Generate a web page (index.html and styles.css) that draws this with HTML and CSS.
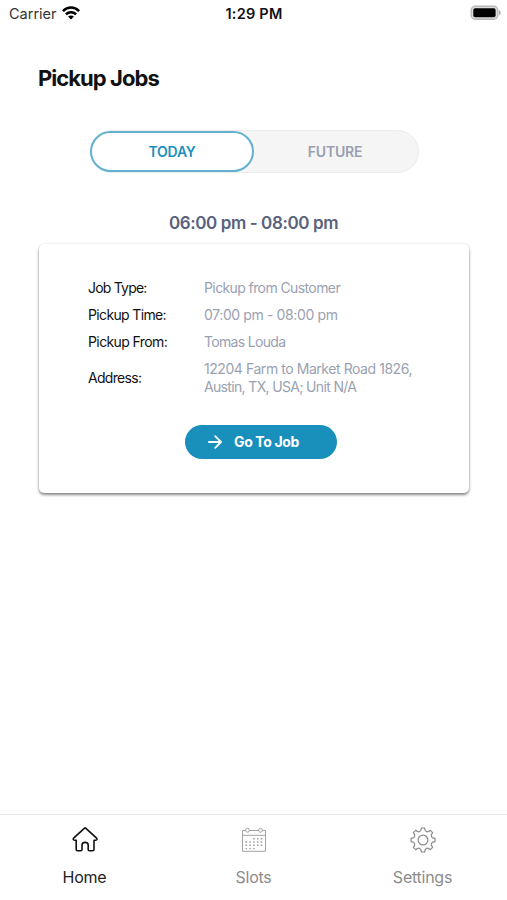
FILE: index.html
```html
<!DOCTYPE html>
<html lang="en">
<head>
<meta charset="utf-8">
<title>Pickup Jobs</title>
<link rel="stylesheet" href="styles.css">
</head>
<body>
<div class="app">
  <header class="status">
    <div class="carrier"><span>Carrier</span>
      <svg class="wifi" viewBox="0 0 18 14" width="18" height="14"><g fill="none" stroke="#000" stroke-width="2.5"><path d="M.9 5.1C5.500.3 12.500.3 17.100 5.100"/><path d="M3.900 8.300c2.800-2.800 7.400-2.800 10.200 0"/></g><path d="M6.100 10.500c1.700-1.500 4.100-1.500 5.800 0L9 13.600z"/></svg>
    </div>
    <span class="clock">1:29 PM</span>
    <svg class="battery" viewBox="0 0 32 16" width="32" height="16"><rect x="1.200" y="1.200" width="26.600" height="13" rx="4" fill="#ddd" stroke="#b8b8b8" stroke-width="1.400"/><rect x="3.300" y="3.200" width="22.300" height="9" rx="1.800"/><path d="M29 5.300c2.300.9 2.300 4 0 4.900z" fill="#aaa"/></svg>
  </header>
  <main class="content">
    <h1>Pickup Jobs</h1>
    <div class="tabs"><button class="tab active"><span>TODAY</span></button><button class="tab"><span>FUTURE</span></button></div>
    <h2><span>06:00 pm - 08:00 pm</span></h2>
    <section class="card">
      <dl>
        <dt><span class="l1">Job Type:</span></dt><dd><span class="v1">Pickup from Customer</span></dd>
        <dt><span class="l2">Pickup Time:</span></dt><dd><span class="v2">07:00 pm - 08:00 pm</span></dd>
        <dt><span class="l3">Pickup From:</span></dt><dd><span class="v3">Tomas Louda</span></dd>
        <dt><span class="l4">Address:</span></dt><dd><span class="v4">12204 Farm to Market Road 1826,</span><br><span class="v5">Austin, TX, USA; Unit N/A</span></dd>
      </dl>
      <button class="go"><svg viewBox="0 0 14 14" width="14" height="14" fill="none" stroke="#fff" stroke-width="1.800" stroke-linecap="round" stroke-linejoin="round"><path d="M1 7h12M7.200 1.200 13 7l-5.800 5.800"/></svg><span>Go To Job</span></button>
    </section>
  </main>
  <nav class="nav">
    <a class="item current"><svg viewBox="0 0 28 28" width="28" height="28" fill="none" stroke="#111" stroke-width="1.600" stroke-linejoin="round" stroke-linecap="round"><path d="M13.300 2.300 2.600 12.200c-.9.900-.3 2 .8 2h1.800v9.300c0 .8.500 1.300 1.300 1.300h3.200c.8 0 1.300-.5 1.300-1.300v-4.400c0-1.900 1.100-2.700 3.100-2.700s3.100.8 3.100 2.700v4.400c0 .8.500 1.300 1.300 1.300h3.200c.8 0 1.300-.5 1.300-1.300v-9.300h1.800c1.100 0 1.700-1.100.8-2L14.900 2.300q-.8-.7-1.600 0Z"/></svg><span>Home</span></a>
    <a class="item"><svg viewBox="0 0 28 28" width="28" height="28" fill="none" stroke="#a3a3a3" stroke-width="1"><path d="M5.800 4.500H2.500v20.800h23V4.500h-3.300M9.200 4.500h9.600M2.500 9.300h23"/><circle cx="7.500" cy="4.300" r="1.900"/><circle cx="20.500" cy="4.300" r="1.900"/><path stroke-width="1.400" stroke-dasharray="1.600 2.200" d="M13.100 12.700h10M5.500 16h17.500M5.500 19.300h17.500M5.500 22.600h10"/></svg><span>Slots</span></a>
    <a class="item"><svg viewBox="-14 -14 28 28" width="28" height="28" fill="none" stroke="#8c8c8c" stroke-width="1.200" stroke-linejoin="round"><path d="M-1.600-12H1.600L2.200-9.500Q3.300-7.950 5.160-8.270L7.350-9.620 9.620-7.350 8.270-5.160Q7.950-3.300 9.500-2.200L12-1.600V1.600L9.500 2.200Q7.950 3.300 8.270 5.160L9.620 7.350 7.350 9.620 5.160 8.270Q3.300 7.950 2.200 9.500L1.600 12H-1.600L-2.200 9.500Q-3.300 7.950-5.160 8.270L-7.350 9.620-9.620 7.350-8.270 5.160Q-7.950 3.300-9.500 2.200L-12 1.600V-1.600L-9.500-2.200Q-7.950-3.300-8.270-5.160L-9.620-7.350-7.350-9.620-5.160-8.270Q-3.300-7.950-2.200-9.500Z"/><circle r="4.900"/></svg><span>Settings</span></a>
  </nav>
</div>
</body>
</html>
```
FILE: styles.css
```css
* { box-sizing: border-box; }
body { margin: 0; background: #fff; font-family: Inter, "Liberation Sans", sans-serif; color: #111; }
.app { height: 900px; display: flex; flex-direction: column; overflow: hidden; }
.app span { white-space: nowrap; }
.status { height: 27px; flex: none; display: grid; grid-template-columns: 1fr auto 1fr; align-items: center; padding: 0 5px 0 9px; font-size: 14.5px; }
.carrier { display: flex; align-items: center; gap: 5px; color: #333; }
.wifi { margin-top: -1px; }
.clock { font-weight: 600; letter-spacing: .25px; margin-right: 3px; }
.battery { justify-self: end; margin-top: -1px; }
.content { flex: 1; padding: 0 38px; display: flex; flex-direction: column; }
h1 { margin: 37px 0 0; font-size: 22px; line-height: 28px; font-weight: 700; letter-spacing: -.95px; color: #111; }
.tabs { margin: 38px 0 0 52px; width: 329px; height: 43px; border: 1px solid #ececec; border-radius: 22px; background: #f5f5f5; display: flex; }
button { font-family: inherit; padding: 0; border: 0; background: none; }
.tab { flex: 1; padding: 0 2px 0 0; font-size: 14px; font-weight: 600; color: #999fb0; letter-spacing: -.2px; }
.tab.active { flex: 0 0 164px; border: 2px solid #62b1d1; border-radius: 22px; background: #fff; color: #1a90bc; margin-left: -1px; padding-right: 0; }
h2 { margin: 38px 0 0; text-align: center; font-size: 17px; line-height: 24px; font-weight: 600; letter-spacing: -.4px; color: #59627d; }
.card { margin: 9px 0 0 1px; height: 249px; padding: 35px 48px 0 49px; border-radius: 5px; background: #fff; box-shadow: 0 2px 3px rgba(0,0,0,.46), 0 0 2px rgba(0,0,0,.12); display: flex; flex-direction: column; }
dl { margin: 0; display: grid; grid-template-columns: 116px 1fr; row-gap: 9px; font-size: 14px; line-height: 18px; letter-spacing: -.5px; align-items: center; }
dt { color: #111; }
dd { margin: 0; color: #9aa1b2; }
.l1 { letter-spacing: -.8px; }
.l2 { letter-spacing: -.65px; }
.l3 { letter-spacing: -.6px; }
.l4 { letter-spacing: -.7px; }
.v1 { letter-spacing: -.6px; }
.v2 { letter-spacing: -.38px; }
.v3 { letter-spacing: -.68px; }
.v4 { letter-spacing: -.44px; }
.v5 { letter-spacing: -.66px; }
.go { margin: 28.500px 0 0 97px; width: 152px; height: 34px; border-radius: 17px; background: #198fbc; color: #fff; display: flex; align-items: center; gap: 12px; padding-left: 23px; font-size: 14px; font-weight: 700; letter-spacing: -.35px; }
.nav { height: 86px; flex: none; border-top: 1px solid #e9e9e9; display: grid; grid-template-columns: repeat(3, 1fr); }
.item { display: flex; flex-direction: column; align-items: center; padding-top: 11px; gap: 11px; font-size: 16px; letter-spacing: -.25px; line-height: 24px; color: #8c8c8c; }
.item.current { color: #222; }
```
